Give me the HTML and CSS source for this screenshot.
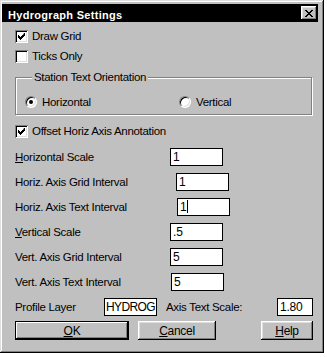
FILE: index.html
```html
<!DOCTYPE html>
<html>
<head>
<meta charset="utf-8">
<link rel="stylesheet" href="styles.css">
</head>
<body>
<div class="win">
  <div class="title">
    <span class="title-text">Hydrograph Settings</span>
    <span class="close">
      <svg width="8" height="7" viewBox="0 0 8 7"><path d="M0 0h2v1h1v1h2V1h1V0h2v1H7v1H6v1H5v1h1v1h1v1h1v1H6V6H5V5H3v1H2v1H0V6h1V5h1V4h1V3H2V2H1V1H0z" fill="#000"/></svg>
    </span>
  </div>
  <div class="body">
    <div class="chk-row"><span class="chk"><svg class="tick" width="7" height="7" viewBox="0 0 7 7"><path d="M6 0h1v3h-1v1h-1v1h-1v1h-1v1h-1v-1h-1v-1h-1v-3h1v1h1v1h1v-1h1v-1h1z" fill="#000"/></svg></span><span>Draw Grid</span></div>
    <div class="chk-row"><span class="chk"></span><span>Ticks Only</span></div>
    <fieldset class="group">
      <legend>Station Text Orientation</legend>
      <div class="radios">
        <span class="opt opt-first"><span class="radio on"></span><span>Horizontal</span></span>
        <span class="opt"><span class="radio"></span><span>Vertical</span></span>
      </div>
    </fieldset>
    <div class="chk-row offset-row"><span class="chk"><svg class="tick" width="7" height="7" viewBox="0 0 7 7"><path d="M6 0h1v3h-1v1h-1v1h-1v1h-1v1h-1v-1h-1v-1h-1v-3h1v1h1v1h1v-1h1v-1h1z" fill="#000"/></svg></span><span>Offset Horiz Axis Annotation</span></div>
    <div class="fields">
      <div class="field"><span class="lbl"><u>H</u>orizontal Scale</span><span class="edit">1</span></div>
      <div class="field"><span class="lbl">Horiz. Axis Grid Interval</span><span class="edit s6">1</span></div>
      <div class="field"><span class="lbl">Horiz. Axis Text Interval</span><span class="edit s7">1<span class="caret"></span></span></div>
      <div class="field"><span class="lbl"><u>V</u>ertical Scale</span><span class="edit">.5</span></div>
      <div class="field"><span class="lbl">Vert. Axis Grid Interval</span><span class="edit">5</span></div>
      <div class="field"><span class="lbl">Vert. Axis Text Interval</span><span class="edit s1">5</span></div>
      <div class="field">
        <span class="lbl lbl-layer">Profile Layer</span><span class="edit edit-layer">HYDROG</span>
        <span class="lbl lbl-scale">Axis Text Scale:</span><span class="edit edit-small">1.80</span>
      </div>
    </div>
    <div class="buttons">
      <span class="btn btn-default btn-ok"><span><u>O</u>K</span></span>
      <span class="btn btn-cancel"><span><u>C</u>ancel</span></span>
      <span class="btn btn-help"><span><u>H</u>elp</span></span>
    </div>
  </div>
</div>
</body>
</html>
```

FILE: styles.css
```css
* { box-sizing: border-box; }
body {
  margin: 0;
  background: #fff;
  font-family: "Liberation Sans", Arial, sans-serif;
  font-size: 11.5px;
  letter-spacing: -0.3px;
  color: #000;
}
.win {
  width: 324px;
  height: 353px;
  background: #c0c0c0;
  padding: 4px 6px 0 2px;
  box-shadow: inset -1px -1px #000, inset 1px 1px #dfdfdf, inset -2px -2px #808080, inset 2px 2px #fff;
}
.title {
  height: 18px;
  background: #000;
  color: #fff;
  display: flex;
  align-items: center;
  justify-content: space-between;
  padding: 0 1px 0 6px;
}
.title-text {
  font-weight: bold;
  font-size: 11px;
  letter-spacing: 0.3px;
  padding-top: 3px;
}
.close {
  width: 16px;
  height: 14px;
  background: #c0c0c0;
  display: flex;
  align-items: center;
  justify-content: center;
  box-shadow: inset -1px -1px #000, inset 1px 1px #fff, inset -2px -2px #808080, inset 2px 2px #dfdfdf;
}
.close svg { display: block; }
.body {
  padding: 4px 0 0 13px;
}
.chk-row {
  display: flex;
  align-items: center;
  height: 20px;
}
.chk {
  width: 13px;
  height: 13px;
  margin-right: 4px;
  background: #fff;
  box-shadow: inset 1px 1px #808080, inset -1px -1px #fff, inset 2px 2px #000, inset -2px -2px #dfdfdf;
  display: flex;
  align-items: center;
  justify-content: center;
}
.tick { display: block; }
.group {
  margin: 5px 0 0 0;
  padding: 0 0 2px 9px;
  width: 297px;
  border: 1px solid #808080;
  box-shadow: 1px 1px 0 #fff, inset 1px 1px 0 #fff;
}
.group legend {
  margin-left: 7px;
  padding: 0 2px;
  line-height: 13px;
  background: #c0c0c0;
}
.radios {
  display: flex;
  align-items: center;
  height: 20px;
  margin-top: 8px;
}
.opt {
  display: flex;
  align-items: center;
}
.opt-first { width: 154px; }
.radio {
  position: relative;
  width: 12px;
  height: 12px;
  margin-right: 5px;
  border-radius: 50%;
  background: #fff;
  border: 1px solid;
  border-color: #808080 #fff #fff #808080;
  box-shadow: inset 1px 1px #000, inset -1px -1px #dfdfdf;
}
.radio.on::after {
  content: "";
  position: absolute;
  left: 3px;
  top: 3px;
  width: 4px;
  height: 4px;
  border-radius: 50%;
  background: #000;
}
.offset-row { margin-top: 6px; }
.fields { margin-top: 3px; }
.field {
  display: flex;
  align-items: center;
  height: 25px;
}
.lbl { width: 155px; }
.edit {
  width: 53px;
  height: 18px;
  background: #fff;
  border: 1px solid #000;
  padding-left: 2px;
  line-height: 16px;
  font-size: 12px;
  letter-spacing: -0.2px;
  display: flex;
  align-items: center;
  overflow: hidden;
  white-space: nowrap;
}
.edit-layer {
  padding-left: 1px;
  letter-spacing: -0.6px;
}
.s6 { margin-left: 6px; }
.s7 { margin-left: 7px; }
.s1 { margin-left: 1px; }
.caret {
  width: 1px;
  height: 13px;
  background: #000;
  margin-left: 1px;
}
.lbl-layer { width: 89px; }
.lbl-scale { width: 111px; margin-left: 9px; }
.edit-small { width: 36px; }
.buttons {
  display: flex;
  margin-top: 2px;
  font-size: 12px;
}
.btn {
  height: 19px;
  display: flex;
  align-items: center;
  justify-content: center;
  background: #c0c0c0;
  box-shadow: inset -1px -1px #000, inset 1px 1px #fff, inset -2px -2px #808080, inset 2px 2px #dfdfdf;
}
.btn-default {
  border: 1px solid #000;
  box-shadow: inset -1px -1px #000, inset 1px 1px #fff, inset -2px -2px #808080;
}
.btn-ok { width: 114px; }
.btn-cancel { width: 78px; margin-left: 9px; }
.btn-help { width: 52px; margin-left: 45px; }
```
